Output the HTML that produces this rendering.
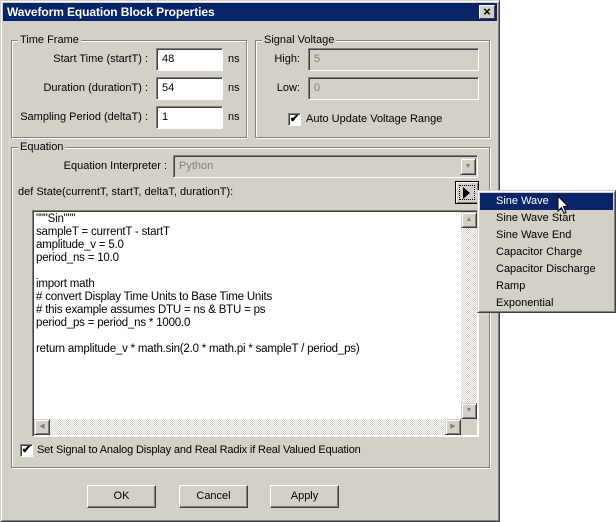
<!DOCTYPE html>
<html><head><style>
*{box-sizing:border-box;margin:0;padding:0}
body{width:616px;height:522px;background:#fff;position:relative;overflow:hidden;font-family:"Liberation Sans",sans-serif;font-size:11px;color:#000}
.a{position:absolute;white-space:nowrap}
.win{left:0;top:0;width:500px;height:522px;background:#d4d0c8;border:1px solid;border-color:#d4d0c8 #404040 #404040 #d4d0c8;box-shadow:inset 1px 1px 0 #fff,inset -1px -1px 0 #808080}
.title{left:3px;top:3px;width:494px;height:18px;background:#0a246a;color:#fff;font-weight:bold;font-size:12px;padding:1px 4px;line-height:16px;letter-spacing:-0.1px}
.close{left:479px;top:5px;width:16px;height:14px;background:#d4d0c8;border:1px solid;border-color:#fff #404040 #404040 #fff;font-size:13px;line-height:11px;text-align:center;font-weight:bold;color:#000}
.grp{border:1px solid #808080;box-shadow:1px 1px 0 #fff,inset 1px 1px 0 #fff}
.leg{background:#d4d0c8;padding:0 2px;line-height:13px;font-size:11px}
.inp{background:#fff;border:1px solid;border-color:#808080 #fff #fff #808080;box-shadow:inset 1px 1px 0 #404040;padding:4px 5px;font-size:11px;line-height:13px}
.dis{background:#d4d0c8;color:#808080}
.lbl{text-align:right;font-size:11px}
.cb{width:13px;height:13px;background:#fff;border:1px solid;border-color:#808080 #fff #fff #808080;box-shadow:inset 1px 1px 0 #404040;font-size:11px;line-height:10px;text-align:center;font-weight:bold}
.btn{width:69px;height:23px;border:1px solid;border-color:#fff #404040 #404040 #fff;box-shadow:inset -1px -1px 0 #808080;text-align:center;line-height:20px;font-size:11px}
.sb{background-image:repeating-conic-gradient(#d4d0c8 0 25%,#fff 0 50%);background-size:2px 2px}
.sbb{width:16px;height:16px;background:#d4d0c8;border:1px solid;border-color:#d4d0c8 #404040 #404040 #d4d0c8;box-shadow:inset 1px 1px 0 #fff,inset -1px -1px 0 #808080;font-size:7px;color:#808080;text-align:center;line-height:14px}
.code{font-size:11.5px;line-height:13px;white-space:pre;letter-spacing:-0.2px}
.menu{left:477px;top:190px;width:139px;height:123px;background:#d4d0c8;border:1px solid;border-color:#d4d0c8 #404040 #404040 #d4d0c8;box-shadow:inset 1px 1px 0 #fff,inset -1px -1px 0 #808080;padding:2px}
.mi{height:17px;line-height:17px;padding-left:16px;font-size:11px}
</style></head><body>
<div class="a win"></div>
<div class="a title">Waveform Equation Block Properties</div>
<div class="a close">×</div>

<div class="a grp" style="left:11px;top:40px;width:236px;height:98px"></div>
<div class="a leg" style="left:18px;top:34px">Time Frame</div>
<div class="a lbl" style="left:10px;top:53px;width:138px">Start Time (startT) :</div>
<div class="a lbl" style="left:10px;top:82px;width:138px">Duration (durationT) :</div>
<div class="a lbl" style="left:10px;top:111px;width:138px">Sampling Period (deltaT) :</div>
<div class="a inp" style="left:156px;top:48px;width:67px;height:23px">48</div>
<div class="a inp" style="left:156px;top:77px;width:67px;height:23px">54</div>
<div class="a inp" style="left:156px;top:106px;width:67px;height:23px">1</div>
<div class="a" style="left:228px;top:53px">ns</div>
<div class="a" style="left:228px;top:82px">ns</div>
<div class="a" style="left:228px;top:111px">ns</div>

<div class="a grp" style="left:255px;top:40px;width:235px;height:98px"></div>
<div class="a leg" style="left:262px;top:34px">Signal Voltage</div>
<div class="a lbl" style="left:260px;top:53px;width:40px">High:</div>
<div class="a lbl" style="left:260px;top:82px;width:40px">Low:</div>
<div class="a inp dis" style="left:308px;top:48px;width:171px;height:23px">5</div>
<div class="a inp dis" style="left:308px;top:77px;width:171px;height:23px">0</div>
<div class="a cb" style="left:288px;top:113px">✔</div>
<div class="a" style="left:306px;top:113px">Auto Update Voltage Range</div>

<div class="a grp" style="left:11px;top:147px;width:479px;height:321px"></div>
<div class="a leg" style="left:18px;top:141px">Equation</div>
<div class="a lbl" style="left:30px;top:160px;width:137px">Equation Interpreter :</div>
<div class="a inp dis" style="left:173px;top:155px;width:305px;height:23px">Python</div>
<div class="a sbb" style="left:460px;top:158px;width:16px;height:17px;line-height:15px">▼</div>
<div class="a" style="left:18px;top:186px">def State(currentT, startT, deltaT, durationT):</div>
<div class="a" style="left:455px;top:181px;width:24px;height:23px;border:1px solid #000;background:#d4d0c8;box-shadow:inset 1px 1px 0 #fff,inset -1px -1px 0 #808080"><div class="a" style="left:3px;top:3px;width:16px;height:15px;border:1px dotted #000"></div><div class="a" style="left:7px;top:5px;width:0;height:0;border-left:7px solid #000;border-top:6px solid transparent;border-bottom:6px solid transparent"></div></div>

<div class="a inp" style="left:32px;top:210px;width:447px;height:227px;padding:0"></div>
<div class="a code" style="left:36px;top:213px">"""Sin"""
sampleT = currentT - startT
amplitude_v = 5.0
period_ns = 10.0

import math
# convert Display Time Units to Base Time Units
# this example assumes DTU = ns &amp; BTU = ps
period_ps = period_ns * 1000.0

return amplitude_v * math.sin(2.0 * math.pi * sampleT / period_ps)</div>
<div class="a sb" style="left:461px;top:212px;width:16px;height:207px"></div>
<div class="a sbb" style="left:461px;top:212px">▲</div>
<div class="a sbb" style="left:461px;top:403px">▼</div>
<div class="a sb" style="left:34px;top:419px;width:427px;height:16px"></div>
<div class="a sbb" style="left:34px;top:419px">◀</div>
<div class="a sbb" style="left:445px;top:419px">▶</div>
<div class="a" style="left:461px;top:419px;width:16px;height:16px;background:#d4d0c8"></div>

<div class="a cb" style="left:20px;top:444px">✔</div>
<div class="a" style="left:37px;top:444px;letter-spacing:-0.15px">Set Signal to Analog Display and Real Radix if Real Valued Equation</div>

<div class="a btn" style="left:87px;top:485px">OK</div>
<div class="a btn" style="left:179px;top:485px">Cancel</div>
<div class="a btn" style="left:270px;top:485px">Apply</div>

<div class="a menu">
<div class="mi" style="background:#0a246a;color:#fff">Sine Wave</div>
<div class="mi">Sine Wave Start</div>
<div class="mi">Sine Wave End</div>
<div class="mi">Capacitor Charge</div>
<div class="mi">Capacitor Discharge</div>
<div class="mi">Ramp</div>
<div class="mi">Exponential</div>
</div>
<svg class="a" style="left:557px;top:195px" width="14" height="22" viewBox="0 0 14 22"><path d="M1 1 L1 16 L4.5 12.5 L7 18.5 L9 17.5 L6.5 11.5 L11 11.5 Z" fill="#fff" stroke="#000" stroke-width="1"/></svg>
</body></html>
